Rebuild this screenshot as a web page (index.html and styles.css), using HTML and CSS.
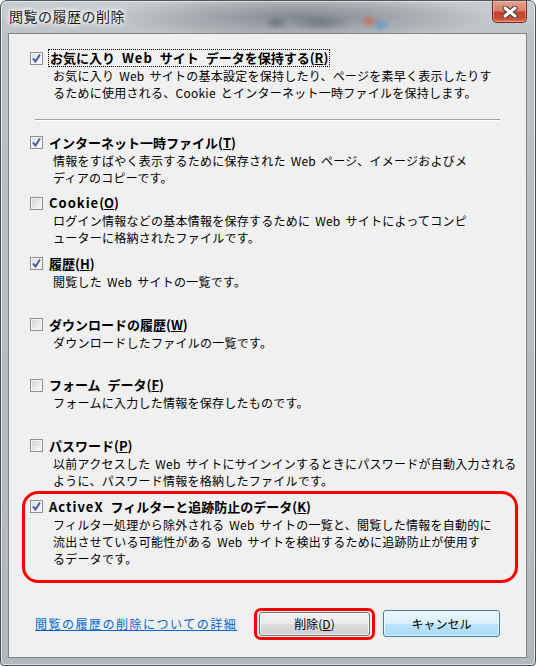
FILE: index.html
```html
<!DOCTYPE html>
<html>
<head>
	<meta http-equiv="content-type" content="text/html; charset=utf-8" />
	<title>閲覧の履歴の削除</title>
	<link rel="stylesheet" href="styles.css">
</head>
<body>
	<div class="window">
		<div class="titlebar">
			<span class="title">閲覧の履歴の削除</span>
			<div class="close">
				<svg width="16" height="12" viewBox="0 0 16 12">
					<path d="M3 2 L13 10 M13 2 L3 10" stroke="#3c3c3c" stroke-width="5" stroke-linecap="round" />
					<path d="M3 2 L13 10 M13 2 L3 10" stroke="#fff" stroke-width="3" stroke-linecap="round" />
				</svg>
			</div>
		</div>

		<div class="panel">
			<div class="options">
				<div class="item">
					<div class="head">
						<span class="cb checked"><svg width="11" height="11" viewBox="0 0 11 11"><path d="M2 5.5 L4.5 8.5 L9 1.5" fill="none" stroke="#4b5f9a" stroke-width="2" /></svg></span>
						<span class="label focus">お気に入り <span class="latin">Web</span> サイト データを保持する(<u>R</u>)</span>
					</div>
					<div class="desc">お気に入り Web サイトの基本設定を保持したり、ページを素早く表示したりす<br>るために使用される、Cookie とインターネット一時ファイルを保持します。</div>
				</div>

				<div class="sep"></div>

				<div class="item">
					<div class="head">
						<span class="cb checked"><svg width="11" height="11" viewBox="0 0 11 11"><path d="M2 5.5 L4.5 8.5 L9 1.5" fill="none" stroke="#4b5f9a" stroke-width="2" /></svg></span>
						<span class="label">インターネット一時ファイル(<u>T</u>)</span>
					</div>
					<div class="desc">情報をすばやく表示するために保存された Web ページ、イメージおよびメ<br>ディアのコピーです。</div>
				</div>

				<div class="item">
					<div class="head">
						<span class="cb"></span>
						<span class="label"><span class="latin">Cookie</span>(<u>O</u>)</span>
					</div>
					<div class="desc">ログイン情報などの基本情報を保存するために Web サイトによってコンピ<br>ューターに格納されたファイルです。</div>
				</div>

				<div class="item">
					<div class="head">
						<span class="cb checked"><svg width="11" height="11" viewBox="0 0 11 11"><path d="M2 5.5 L4.5 8.5 L9 1.5" fill="none" stroke="#4b5f9a" stroke-width="2" /></svg></span>
						<span class="label">履歴(<u>H</u>)</span>
					</div>
					<div class="desc">閲覧した Web サイトの一覧です。</div>
				</div>

				<div class="item">
					<div class="head">
						<span class="cb"></span>
						<span class="label">ダウンロードの履歴(<u>W</u>)</span>
					</div>
					<div class="desc">ダウンロードしたファイルの一覧です。</div>
				</div>

				<div class="item">
					<div class="head">
						<span class="cb"></span>
						<span class="label">フォーム データ(<u>F</u>)</span>
					</div>
					<div class="desc">フォームに入力した情報を保存したものです。</div>
				</div>

				<div class="item">
					<div class="head">
						<span class="cb"></span>
						<span class="label">パスワード(<u>P</u>)</span>
					</div>
					<div class="desc">以前アクセスした Web サイトにサインインするときにパスワードが自動入力される<br>ように、パスワード情報を格納したファイルです。</div>
				</div>

				<div class="item marked">
					<div class="head">
						<span class="cb checked"><svg width="11" height="11" viewBox="0 0 11 11"><path d="M2 5.5 L4.5 8.5 L9 1.5" fill="none" stroke="#4b5f9a" stroke-width="2" /></svg></span>
						<span class="label"><span class="latin">ActiveX</span> フィルターと追跡防止のデータ(<u>K</u>)</span>
					</div>
					<div class="desc">フィルター処理から除外される Web サイトの一覧と、閲覧した情報を自動的に<br>流出させている可能性がある Web サイトを検出するために追跡防止が使用す<br>るデータです。</div>
				</div>
			</div>

			<div class="footer">
				<a class="more" href="#">閲覧の履歴の削除についての詳細</a>
				<div class="buttons">
					<button class="btn btn-delete" type="button">削除(<u>D</u>)</button>
					<button class="btn btn-default" type="button">キャンセル</button>
				</div>
			</div>
		</div>
	</div>
</body>
</html>
```

FILE: styles.css
```css
* {
	box-sizing: border-box;
}

body {
	margin: 0;
	font-family: "Noto Sans CJK JP", sans-serif;
	font-size: 12px;
	color: #000;
	background-color: #fff;
}

/* Aero style window frame */
.window {
	width: 536px;
	height: 666px;
	display: flex;
	flex-direction: column;
	padding: 0 8px 7px 7px;
	border: 1px solid #4f555c;
	border-radius: 7px 7px 4px 4px;
	background:
		radial-gradient(ellipse 10px 8px at 368px 20px, rgba(220, 90, 60, 0.55), transparent),
		radial-gradient(ellipse 10px 8px at 380px 24px, rgba(70, 150, 210, 0.55), transparent),
		radial-gradient(ellipse 12px 7px at 275px 22px, rgba(60, 70, 80, 0.4), transparent),
		radial-gradient(ellipse 30px 8px at 320px 22px, rgba(60, 70, 80, 0.35), transparent),
		radial-gradient(ellipse 190px 24px at 300px 16px, rgba(100, 108, 116, 0.7), transparent),
		linear-gradient(to bottom, #c9cdd1 0px, #bcc1c6 40px, #b3b8bd 100%);
	box-shadow: inset 0 0 0 1px rgba(255, 255, 255, 0.55);
}

.titlebar {
	height: 32px;
	display: flex;
	justify-content: space-between;
	align-items: flex-start;
}

.title {
	padding: 6px 0 0 1px;
	font-size: 14px;
	line-height: 18px;
	letter-spacing: 0.5px;
	color: #1a1a1a;
	text-shadow: 0 0 6px #fff, 0 0 6px #fff, 0 0 3px #fff;
}

.close {
	width: 35px;
	height: 22px;
	display: flex;
	align-items: center;
	justify-content: center;
	border: 1px solid #6b2b22;
	border-top: 0;
	border-radius: 0 0 5px 5px;
	background: linear-gradient(to bottom, #e7a28f 0%, #d6806b 45%, #c5432d 55%, #cf4b33 85%, #e0785c 100%);
	box-shadow: inset 0 0 0 1px rgba(255, 210, 200, 0.45);
}

/* Inner dialog area */
.panel {
	flex: 1;
	display: flex;
	flex-direction: column;
	background-color: #f0f0f0;
	border: 1px solid #7f858b;
}

.options {
	padding: 16px 0 0 21px;
}

.item {
	position: relative;
	height: 60.67px;
}

.head {
	display: flex;
	align-items: center;
	gap: 6px;
	height: 16px;
}

.cb {
	width: 13px;
	height: 13px;
	flex-shrink: 0;
	display: flex;
	align-items: center;
	justify-content: center;
	border: 1px solid #8e8f8f;
	background: linear-gradient(135deg, #cfcfcf 0%, #e6e6e6 50%, #fbfbfb 100%);
	box-shadow: inset 0 0 0 1px #f4f4f4;
}

.cb.checked {
	background: linear-gradient(135deg, #d6dbe6 0%, #eef0f5 50%, #fdfdfd 100%);
}

.label {
	font-size: 13px;
	font-weight: bold;
	line-height: 16px;
	word-spacing: 4px;
	white-space: nowrap;
}

.latin {
	letter-spacing: 1px;
}

.label.focus {
	outline: 1px dotted #000;
	outline-offset: 0;
	padding: 0 1px;
}

.desc {
	margin: 1px 0 0 23px;
	line-height: 17px;
	letter-spacing: 0.25px;
	word-spacing: 2px;
	white-space: nowrap;
}

.sep {
	width: 465px;
	height: 2px;
	margin: 8px 0 14px 5px;
	border-top: 1px solid #a0a0a0;
	border-bottom: 1px solid #fff;
}

/* Red marker drawn over the last option */
.marked::before {
	content: "";
	position: absolute;
	left: -8px;
	top: -8px;
	width: 490px;
	height: 86px;
	border: 3px solid #f00;
	border-radius: 16px;
}

.footer {
	margin-top: auto;
	display: flex;
	align-items: center;
	padding: 0 26px 20px 26px;
}

.more {
	color: #0066cc;
	text-decoration: underline;
	letter-spacing: 1.5px;
}

.buttons {
	margin-left: auto;
	display: flex;
	align-items: center;
	gap: 13px;
}

.btn {
	position: relative;
	height: 24px;
	padding: 0;
	font-family: "Noto Sans CJK JP", sans-serif;
	font-size: 12px;
	color: #000;
	border: 1px solid #707070;
	border-radius: 3px;
	background: linear-gradient(to bottom, #f2f2f2 0%, #ebebeb 50%, #dddddd 51%, #cfcfcf 100%);
	box-shadow: inset 0 0 0 1px rgba(255, 255, 255, 0.7);
}

.btn-delete {
	width: 111px;
}

/* Red marker around the delete button */
.btn-delete::after {
	content: "";
	position: absolute;
	left: -6px;
	top: -5px;
	right: -6px;
	bottom: -5px;
	border: 3px solid #f00;
	border-radius: 7px;
}

.btn-default {
	width: 117px;
	height: 27px;
	border-color: #3c7fb1;
	background: linear-gradient(to bottom, #eaf6fd 0%, #d9f0fc 50%, #bee6fd 51%, #a7d9f5 100%);
}
```
